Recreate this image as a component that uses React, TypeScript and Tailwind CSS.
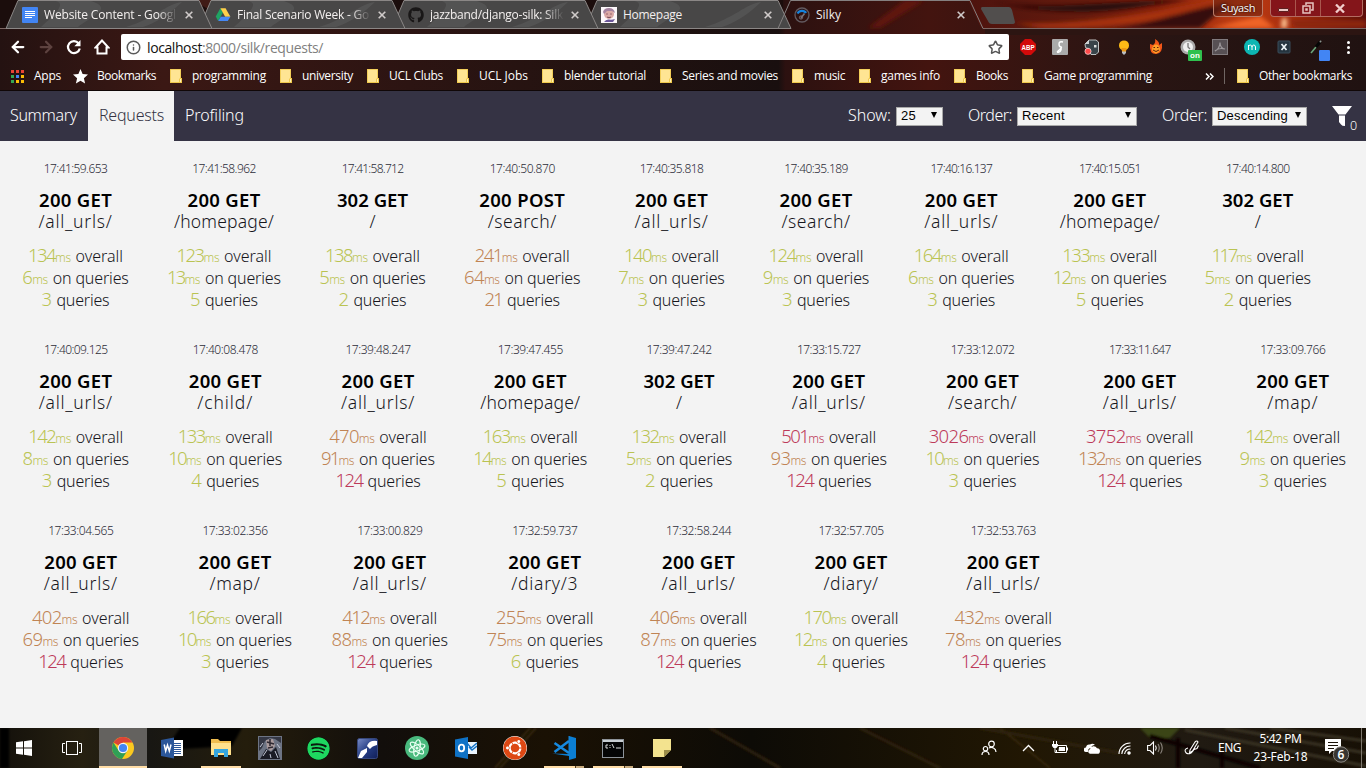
import { useLayoutEffect, useRef, type ReactNode } from "react";
import { ArrowLeft, ArrowRight, Star, Info } from "lucide-react";
import { FaSpotify, FaGithub, FaUbuntu } from "react-icons/fa";

/** Text that spaces its letters so that it fills exactly `w` pixels. */
function Fit({ w, children, className = "" }: { w: number; children: string; className?: string }) {
  const ref = useRef<HTMLSpanElement>(null);
  useLayoutEffect(() => {
    const el = ref.current;
    if (!el) return;
    el.style.letterSpacing = "0px";
    const natural = el.getBoundingClientRect().width;
    const gap = (w - natural) / children.length;
    el.style.letterSpacing = `${gap}px`;
  }, [w, children]);
  return <span ref={ref} className={`inline-block whitespace-pre ${className}`}>{children}</span>;
}

type Tone = "good" | "ok" | "bad";
const tones: Record<Tone, string> = { good: "text-[#bac352]", ok: "text-[#c08454]", bad: "text-[#bd3a5a]" };

type Req = {
  cell: string; time: string; status: string; path: string; pathWidth: number;
  overall: number; spent: number; count: number;
};

const P: Record<string, number> = {
  "/all_urls/": 74, "/homepage/": 100, "/": 6, "/search/": 69, "/child/": 56, "/map/": 51, "/diary/3": 67, "/diary/": 55,
};
const r = (cell: string, time: string, status: string, path: string, overall: number, spent: number, count: number): Req =>
  ({ cell, time, status, path, pathWidth: P[path], overall, spent, count });

const rows: Req[][] = [
  [
    r("w-[145px]", "17:41:59.653", "200 GET", "/all_urls/", 134, 6, 3),
    r("w-[152px]", "17:41:58.962", "200 GET", "/homepage/", 123, 13, 5),
    r("w-[145px]", "17:41:58.712", "302 GET", "/", 138, 5, 2),
    r("w-[154.5px]", "17:40:50.870", "200 POST", "/search/", 241, 64, 21),
    r("w-[144px]", "17:40:35.818", "200 GET", "/all_urls/", 140, 7, 3),
    r("w-[145px]", "17:40:35.189", "200 GET", "/search/", 124, 9, 3),
    r("w-[145.5px]", "17:40:16.137", "200 GET", "/all_urls/", 164, 6, 3),
    r("w-[151.5px]", "17:40:15.051", "200 GET", "/homepage/", 133, 12, 5),
    r("w-[144.5px]", "17:40:14.800", "302 GET", "/", 117, 5, 2),
  ],
  [
    r("w-[145.5px]", "17:40:09.125", "200 GET", "/all_urls/", 142, 8, 3),
    r("w-[153.5px]", "17:40:08.478", "200 GET", "/child/", 133, 10, 4),
    r("w-[152px]", "17:39:48.247", "200 GET", "/all_urls/", 470, 91, 124),
    r("w-[152.5px]", "17:39:47.455", "200 GET", "/homepage/", 163, 14, 5),
    r("w-[145px]", "17:39:47.242", "302 GET", "/", 132, 5, 2),
    r("w-[154.5px]", "17:33:15.727", "200 GET", "/all_urls/", 501, 93, 124),
    r("w-[153px]", "17:33:12.072", "200 GET", "/search/", 3026, 10, 3),
    r("w-[161.5px]", "17:33:11.647", "200 GET", "/all_urls/", 3752, 132, 124),
    r("w-[144.5px]", "17:33:09.766", "200 GET", "/map/", 142, 9, 3),
  ],
  [
    r("w-[155.5px]", "17:33:04.565", "200 GET", "/all_urls/", 402, 69, 124),
    r("w-[153px]", "17:33:02.356", "200 GET", "/map/", 166, 10, 3),
    r("w-[156.5px]", "17:33:00.829", "200 GET", "/all_urls/", 412, 88, 124),
    r("w-[153.5px]", "17:32:59.737", "200 GET", "/diary/3", 255, 75, 6),
    r("w-[154px]", "17:32:58.244", "200 GET", "/all_urls/", 406, 87, 124),
    r("w-[151px]", "17:32:57.705", "200 GET", "/diary/", 170, 12, 4),
    r("w-[153.5px]", "17:32:53.763", "200 GET", "/all_urls/", 432, 78, 124),
  ],
];

const toneOverall = (n: number): Tone => (n > 500 ? "bad" : n > 200 ? "ok" : "good");
const toneSpent = (n: number): Tone => (n > 200 ? "bad" : n > 50 ? "ok" : "good");
const toneCount = (n: number): Tone => (n > 100 ? "bad" : n > 20 ? "ok" : "good");
const numberWidth = (n: number) => [...String(n)].reduce((s, c) => s + (c === "1" ? 7.4 : 9.9), 0);
const timeWidth = (t: string) => [...t].reduce((s, c) => s + (c === "1" ? 4.6 : c === ":" || c === "." ? 3 : 6.45), 0);

function Line({ n, tone, unit, text, width }: { n: number; tone: Tone; unit?: boolean; text: string; width: number }) {
  return (
    <div className="flex h-[22px] items-baseline justify-center leading-[22px]">
      <Fit w={numberWidth(n)} className={`text-[18.5px] leading-[22px] ${tones[tone]}`}>{String(n)}</Fit>
      {unit && <Fit w={15.5} className={`text-[12px] ${tones[tone]}`}>ms</Fit>}
      <Fit w={width} className="ml-[5px] text-[16px] text-[#16161c]">{text}</Fit>
    </div>
  );
}

function Request({ q }: { q: Req }) {
  return (
    <div className={`flex shrink-0 flex-col items-center ${q.cell}`}>
      <Fit w={timeWidth(q.time)} className="h-[18px] text-[12px] leading-[18px] text-[#2c2c38]">{q.time}</Fit>
      <Fit w={q.status.endsWith("POST") ? 86 : q.status.startsWith("3") ? 71 : 73} className="mt-[11px] h-[22px] text-[18.5px] font-semibold leading-[21px] text-black">{q.status}</Fit>
      <Fit w={q.pathWidth} className="h-[20px] text-[17.5px] leading-[20px] text-[#16161c]">{q.path}</Fit>
      <div className="mt-[13px]">
        <Line n={q.overall} tone={toneOverall(q.overall)} unit text="overall" width={47.5} />
        <Line n={q.spent} tone={toneSpent(q.spent)} unit text="on queries" width={76} />
        <Line n={q.count} tone={toneCount(q.count)} text="queries" width={53} />
      </div>
    </div>
  );
}

function Wallpaper() {
  return (
    <svg className="absolute inset-0 h-[91px] w-[1366px]" viewBox="0 0 1366 91" preserveAspectRatio="none">
      <defs>
        <linearGradient id="base" x1="0" x2="1" y1="0" y2="0">
          <stop offset="0" stopColor="#241211" /><stop offset=".12" stopColor="#3b1814" />
          <stop offset=".3" stopColor="#2c1412" /><stop offset=".46" stopColor="#211210" />
          <stop offset=".57" stopColor="#190f0f" /><stop offset=".575" stopColor="#2c1110" />
          <stop offset=".68" stopColor="#43140f" /><stop offset=".82" stopColor="#2a1513" /><stop offset="1" stopColor="#201211" />
        </linearGradient>
        <linearGradient id="fire" x1="0" x2="1" y1="0" y2="0">
          <stop offset="0" stopColor="#4d130e" /><stop offset=".3" stopColor="#671b0d" /><stop offset=".48" stopColor="#821f0c" />
          <stop offset=".68" stopColor="#c03d13" /><stop offset=".82" stopColor="#a52c0e" /><stop offset="1" stopColor="#5c0d0a" />
        </linearGradient>
        <filter id="soft"><feGaussianBlur stdDeviation="2" /></filter>
      </defs>
      <rect width="1366" height="91" fill="url(#base)" />
      <rect width="783" height="28" fill="#1b0d0c" />
      <path d="M45 0H190L203 28H40Z M192 0H215L210 10Z" fill="#401b16" />
      <path d="M968 0H1366V28H981Z" fill="url(#fire)" />
      <g filter="url(#soft)">
        <path d="M990 2C1050 12 1110 0 1190 0L1150 5C1090 16 1040 12 990 2Z" fill="#27100f" />
        <path d="M1015 23C1080 26 1140 14 1215 0L1235 5C1170 20 1110 30 1040 28Z" fill="#a6320f" />
        <path d="M1110 28C1170 20 1190 8 1230 3L1200 28Z" fill="#341110" />
        <path d="M1210 28L1260 16 1275 28Z" fill="#ef6425" />
        <path d="M1282 18H1287V28H1281Z" fill="#ffc493" />
        <path d="M1290 20H1366V28H1295Z" fill="#8c260e" />
        <path d="M880 28L925 0H905L868 28Z" fill="#61190f" />
      </g>
      <rect y="29" x="985" width="381" height="6" fill="#2c1512" />
      <path d="M0 28.5H778M983 28.5H1366" stroke="#7d6764" />
      {[585, 392, 199, 6].map((x) => (
        <g key={x}>
          <path d={`M${x} 28.5L${x + 12} 0.5H${x + 193}L${x + 206} 28.5Z`} fill="#484747" stroke="#8b8786" />
          <path d={`M${x + 35} 27C${x + 60} 5 ${x + 55} 3 ${x + 50} 1H${x + 85}C${x + 110} 9 ${x + 82} 18 ${x + 72} 27ZM${x + 120} 27C${x + 150} 18 ${x + 160} 4 ${x + 176} 2C${x + 165} 13 ${x + 150} 23 ${x + 137} 27Z`} fill="#626161" opacity=".45" />
        </g>
      ))}
      <path d="M778 28.5L790.5 0.5H970L983 28.5" fill="none" stroke="#858080" />
      <path d="M982 7H1009Q1011 7 1012 10L1015 22Q1015 24 1012 24H992Q989 24 988 21L981 9Q981 7 982 7Z" fill="#514e4d" />
      <path d="M0 90.5H1366" stroke="#100707" />
    </svg>
  );
}

function DocsIcon() {
  return <svg className="h-4 w-4" viewBox="0 0 16 16"><rect width="16" height="16" rx="1" fill="#4285f4" /><path d="M3 4.5H13M3 6.5H13M3 8.5H13M3 10.5H10" stroke="#fff" /></svg>;
}
function DriveIcon() {
  return <svg className="h-4 w-4" viewBox="0 0 16 16"><path d="M5.4 1.2L.7 9.5 3.2 14 8 5.6Z" fill="#1fa463" /><path d="M5.4 1.2H10.6L15.4 9.8H10.2Z" fill="#ffd04b" /><path d="M5.8 9.8H15.4L12.8 14H3.2Z" fill="#4688f4" /></svg>;
}
function HomepageIcon() {
  return <svg className="h-4 w-4" viewBox="0 0 16 16"><rect width="16" height="16" fill="#fdf8fa" /><ellipse cx="8" cy="7" rx="5" ry="5" fill="#dba9a5" /><path d="M2 5Q3 1 8 1T14 6L11 4 6 4 3 7Z" fill="#a583a0" /><path d="M5 7H7M9 7H11M6 10Q8 11 10 10" stroke="#8a5565" strokeWidth=".8" /><path d="M3 15Q5 12 8 12.5T14 12L12 15Z" fill="#6b5799" /></svg>;
}
function SilkyIcon() {
  return <svg className="h-4 w-4" viewBox="0 0 16 16" fill="none"><circle cx="8" cy="8" r="7" stroke="#625a60" strokeWidth="1.3" /><path d="M3.5 6.5Q5 3.8 8 3.8T12 6" stroke="#1483df" strokeWidth="2.2" /><path d="M7 11L10.5 6.5" stroke="#77727a" strokeWidth="1.6" /><circle cx="7" cy="10.5" r="1.6" stroke="#77727a" /></svg>;
}
const Cross = () => <svg className="h-2 w-2" viewBox="0 0 8 8"><path d="M.7.7L7.3 7.3M7.3.7L.7 7.3" stroke="#d0cbca" strokeWidth="1.6" /></svg>;

const tabs: { icon: ReactNode; title: string; w: number; fade?: boolean }[] = [
  { icon: <DocsIcon />, title: "Website Content - Googl", w: 132, fade: true },
  { icon: <DriveIcon />, title: "Final Scenario Week - Go", w: 132, fade: true },
  { icon: <FaGithub className="h-4 w-4 text-[#191717]" />, title: "jazzband/django-silk: Silk", w: 133, fade: true },
  { icon: <HomepageIcon />, title: "Homepage", w: 59 },
  { icon: <SilkyIcon />, title: "Silky", w: 25 },
];

function TabStrip() {
  return (
    <div className="flex h-[29px]">
      <div className="flex pl-[6px]">
        {tabs.map((t) => (
          <div key={t.title} className="flex h-[30px] w-[193px] items-center pl-4 text-[12px] text-[#f3efee]">
            {t.icon}
            <div className={`ml-[6px] w-[134px] overflow-hidden ${t.fade ? "[mask-image:linear-gradient(90deg,#000_85%,transparent_100%)]" : ""}`}>
              <Fit w={t.w}>{t.title}</Fit>
            </div>
            <div className="ml-[7px]"><Cross /></div>
          </div>
        ))}
      </div>
      <div className="ml-auto flex pr-[3px]">
        <div className="mr-[7px] flex h-[17px] w-[50px] items-center justify-center rounded-b border border-t-0 border-[#b97b68] bg-[#6c2210]/60 text-[11px] text-white [text-shadow:0_0_2px_#000]"><Fit w={34}>Suyash</Fit></div>
        <div className="flex h-[17px] w-[93px] rounded-b border border-t-0 border-[#b46b61] bg-[#84151a]">
          <div className="flex w-[25px] items-center justify-center border-r border-[#a9574e]"><div className="mt-1 h-[4px] w-[11px] rounded-[1px] border border-[#5d2020] bg-[#ebc8c5]" /></div>
          <div className="flex w-[25px] items-center justify-center border-r border-[#a9574e]"><svg className="h-3 w-3" viewBox="0 0 12 12" fill="none" stroke="#e6c3c0" strokeWidth="1.5"><path d="M4 3V1H11V8H9" /><rect x="1" y="4" width="7" height="7" /><rect x="4" y="7" width="1" height="1" /></svg></div>
          <div className="flex flex-1 items-center justify-center pr-[3px]"><svg className="h-[9px] w-[10px]" viewBox="0 0 10 9"><path d="M1 .5L9 8.5M9 .5L1 8.5" stroke="#f0ccca" strokeWidth="2.3" /></svg></div>
        </div>
      </div>
    </div>
  );
}

const extensions: ReactNode[] = [
  <svg viewBox="0 0 16 16"><path d="M5 0H11L16 5V11L11 16H5L0 11V5Z" fill="#d20a0a" /><text x="8" y="10.6" textAnchor="middle" fontSize="7" fontWeight="700" fill="#fff" textLength="13" lengthAdjust="spacingAndGlyphs">ABP</text></svg>,
  <svg viewBox="0 0 16 16"><rect width="16" height="16" rx="1" fill="#aaa" /><path d="M11 3Q7 2 7 5T9 8 5 13M7 7Q10 8 9 11T5 13" stroke="#fff" strokeWidth="1.4" fill="none" /></svg>,
  <svg viewBox="0 0 16 16"><path d="M1 5L5 1H12L14.5 3V13L12 15.5H7L5 10 1.5 8.5Z" fill="#39444a" stroke="#cdd3d3" strokeWidth=".9" /><path d="M10 6H12.5V8.5H10Z" fill="#dce0e0" /><path d="M1 5L5 1V5H1Z" fill="#cbd2d2" /><circle cx="4" cy="12.3" r="3.1" fill="#ff4b4b" stroke="#fff" strokeWidth=".6" /></svg>,
  <svg viewBox="0 0 16 16"><circle cx="8" cy="6.4" r="5" fill="#fdbb16" /><path d="M5.5 9H10.5L10 13H6Z" fill="#ec9815" /><path d="M6 12.5H10V14L8 16 6 14Z" fill="#b9bec1" /></svg>,
  <svg viewBox="0 0 16 16"><path d="M7 0Q12 3 11 6L14 4Q15 15 8 15T2 5L5 6Q8 4 7 0Z" fill="#f25618" /><ellipse cx="8" cy="10" rx="4" ry="4.4" fill="#ff9d25" /><path d="M5.5 8.5H7M9 8.5H10.5M5 11Q8 14 11 11" stroke="#5d2010" fill="none" /></svg>,
  <svg viewBox="0 0 16 16" className="overflow-visible"><circle cx="8" cy="8" r="7.5" fill="#aaa9a9" /><circle cx="8" cy="8" r="5" fill="#eee" /><path d="M8 4V8L10 10" stroke="#777" strokeWidth="1.3" fill="none" /><rect x="8" y="11" width="14" height="11" rx="1" fill="#2fc04e" /><text x="15" y="19.3" textAnchor="middle" fontSize="8" fontWeight="700" fill="#fff">on</text></svg>,
  <svg viewBox="0 0 16 16"><rect x=".5" y=".5" width="15" height="15" fill="#575054" stroke="#817b7e" /><path d="M3 12C6 11 8 7 8 3.5C8 7 10 10 13 10C9 9 6 9 3 12Z" stroke="#9c979a" strokeWidth="1.2" fill="none" /></svg>,
  <svg viewBox="0 0 16 16"><circle cx="8" cy="8" r="8" fill="#0db6b3" /><path d="M4.5 11V6M4.5 7.5Q5 6 6.3 6T8 8V11M8 8Q8.4 6 9.8 6T11.5 8V11" stroke="#fff" fill="none" /></svg>,
  <svg viewBox="0 0 16 16"><rect x="2" y="2" width="12" height="12" rx="1" fill="#25343f" stroke="#3a4d5a" /><path d="M5.5 5L10.5 11M10.5 5L5.5 11" stroke="#edf4f7" strokeWidth="1.7" /></svg>,
  <svg viewBox="0 0 16 16" className="overflow-visible"><path d="M3 14L8 8" stroke="#6aa67a" strokeWidth="1.6" /><path d="M8 8L12 3" stroke="#060606" strokeWidth="3" /><path d="M12 2L13 3" stroke="#8b9690" strokeWidth="2" /><rect x="11" y="11" width="11" height="11" rx="1" fill="#4285f4" /></svg>,
];

function Toolbar() {
  return (
    <div className="flex h-[34px] items-center pt-[2px] text-white">
      <ArrowLeft className="ml-[9px] h-[18px] w-[18px]" strokeWidth={3} />
      <ArrowRight className="ml-[10px] h-[18px] w-[18px] text-[#5d423f]" strokeWidth={3} />
      <svg className="ml-[11px] h-4 w-4" viewBox="0 0 16 16" fill="none" stroke="currentColor"><path d="M12.6 4.2A6 6 0 1 0 13.8 9.5" strokeWidth="2.2" /><path d="M14.5 1V7.2H8.3Z" fill="currentColor" stroke="none" /></svg>
      <svg className="ml-[12px] h-4 w-4" viewBox="0 0 16 16" fill="none" stroke="currentColor" strokeWidth="2"><path d="M8 1.5L1.5 8.5H3.5V14.5H12.5V8.5H14.5Z" /></svg>
      <div className="ml-[11px] flex h-[26px] w-[888px] items-center rounded-[2px] bg-white pl-[5px] pr-[6px] text-[14px]">
        <Info className="h-[15px] w-[15px] text-[#5a5a5a]" strokeWidth={2.4} />
        <Fit w={55} className="ml-[6px] text-[#111]">localhost</Fit>
        <Fit w={121} className="text-[#7f7f7f]">:8000/silk/requests/</Fit>
        <Star className="ml-auto h-[15px] w-[15px] text-[#555]" strokeWidth={2.4} />
      </div>
      <div className="ml-[11px] flex gap-4">
        {extensions.map((e, i) => <div key={i} className="h-4 w-4 font-['Liberation_Sans'] *:h-4 *:w-4">{e}</div>)}
      </div>
      <div className="ml-[23px] flex flex-col gap-[2px]">{[0, 1, 2].map((i) => <div key={i} className="h-[3px] w-[3px] rounded-full bg-white" />)}</div>
    </div>
  );
}

const Folder = () => <svg className="h-[14px] w-3 shrink-0" viewBox="0 0 12 14"><path d="M0 0H11V9H12V14H0Z" fill="#f0c94c" /><path d="M.8.8H10.2V9L9 10V13H.8Z" fill="#ffe593" /><path d="M10 10H11V13H10Z" fill="#fff0b8" /></svg>;
const bookmarks: [string, number][] = [
  ["programming", 74], ["university", 51], ["UCL Clubs", 54], ["UCL Jobs", 49], ["blender tutorial", 82],
  ["Series and movies", 96], ["music", 31], ["games info", 59], ["Books", 32], ["Game programming", 108],
];

function BookmarksBar() {
  return (
    <div className="flex h-[28px] items-center pb-[2px] text-[12px] text-white">
      <div className="ml-[11px] grid grid-cols-3 gap-[2px]">
        {["bg-[#e94335]", "bg-[#e94335]", "bg-[#e94335]", "bg-[#34a853]", "bg-[#4285f4]", "bg-[#fbbc05]", "bg-[#34a853]", "bg-[#fbbc05]", "bg-[#fbbc05]"].map((c, i) => <div key={i} className={`h-[3px] w-[3px] ${c}`} />)}
      </div>
      <Fit w={27} className="ml-[10px]">Apps</Fit>
      <svg className="ml-[12px] h-[15px] w-[15px]" viewBox="0 0 15 15"><path d="M7.5 0L9.6 5.1 15 5.6 10.9 9.2 12.1 14.6 7.5 11.8 2.9 14.6 4.1 9.2 0 5.6 5.4 5.1Z" fill="#fff" /></svg>
      <Fit w={59} className="ml-[9px]">Bookmarks</Fit>
      <div className="ml-[14px] flex items-center gap-[14px]">
        {bookmarks.map(([label, w]) => <div key={label} className="flex items-center gap-[10px]"><Folder /><Fit w={w}>{label}</Fit></div>)}
      </div>
      <svg className="ml-auto h-[7px] w-[9px]" viewBox="0 0 9 7"><path d="M1 .5L4 3.5 1 6.5M5 .5L8 3.5 5 6.5" stroke="#fff" strokeWidth="1.5" fill="none" /></svg>
      <div className="mx-[10px] h-4 w-px bg-[#706663]" />
      <div className="mr-[14px] ml-[2px] flex items-center gap-[10px]"><Folder /><Fit w={93}>Other bookmarks</Fit></div>
    </div>
  );
}

function Select({ label, labelWidth, value, valueWidth, box }: { label: string; labelWidth: number; value: string; valueWidth: number; box: string }) {
  return (
    <div className="flex items-center">
      <Fit w={labelWidth} className="mb-[2px] text-[16px] text-white">{label}</Fit>
      <div className={`ml-[5px] flex h-[19px] items-center justify-between border border-[#a9a9a9] bg-[#f3f3f3] pl-[4px] pr-[5px] font-['Liberation_Sans'] text-[13px] font-normal text-black ${box}`}>
        <Fit w={valueWidth}>{value}</Fit>
        <svg className="mb-[2px] h-[6px] w-[6px]" viewBox="0 0 7 7"><path d="M0 0H7L3.5 7Z" fill="#000" /></svg>
      </div>
    </div>
  );
}

function Nav() {
  return (
    <nav className="flex h-[50px] shrink-0 bg-[#353344] text-[16px] font-[350] text-white">
      <div className="flex w-[88px] items-center pb-[2px] pl-[10px]"><Fit w={67}>Summary</Fit></div>
      <div className="flex w-[86px] items-center bg-[#f3f3f3] pb-[2px] pl-[11px] font-light text-[#353344]"><Fit w={65}>Requests</Fit></div>
      <div className="flex items-center pb-[2px] pl-[11px]"><Fit w={59}>Profiling</Fit></div>
      <div className="ml-auto flex items-center gap-[25px]">
        <Select label="Show:" labelWidth={43} value="25" valueWidth={15} box="w-[47px]" />
        <Select label="Order:" labelWidth={44} value="Recent" valueWidth={43} box="w-[120px]" />
        <Select label="Order:" labelWidth={45} value="Descending" valueWidth={71} box="w-[95px]" />
      </div>
      <div className="ml-[25px] flex w-[34px] pt-[15px]">
        <svg className="h-5 w-5 shrink-0" viewBox="0 0 20 20"><path d="M0 0H20L13.5 8.5H6.5Z M7 9.5H13V20Q10 20 9 18.5L7 16Z" fill="#fff" /></svg>
        <span className="-ml-[2px] mt-[11px] text-[12.5px] leading-[18px]">0</span>
      </div>
    </nav>
  );
}

const taskIcons: { icon: ReactNode; line?: boolean; active?: boolean; stacked?: boolean }[] = [
  { icon: <svg className="h-4 w-4" viewBox="0 0 16 16"><path d="M0 2.3L7 1.3V7.5H0ZM8 1.2L16 0V7.5H8ZM0 8.5H7V14.7L0 13.7ZM8 8.5H16V16L8 14.8Z" fill="#fff" /></svg> },
  { icon: <svg className="mr-[3px] h-4 w-5" viewBox="0 0 20 16" fill="none" stroke="#fff"><rect x="4.5" y="1.5" width="11" height="13" /><path d="M3 3.5H.5V12.5H3M17 3.5H19.5V12.5H17" /></svg> },
  { active: true, line: true, icon: <svg className="h-[22px] w-[22px]" viewBox="0 0 22 22"><circle cx="11" cy="11" r="11" fill="#fbc91f" /><path d="M11 11L1.5 5.5A11 11 0 0 1 20.5 5.5H11Z" fill="#db4437" /><path d="M1.5 5.5A11 11 0 0 0 10 22L15.5 13.5 6.5 13.5Z" fill="#2f9f56" /><circle cx="11" cy="11" r="5.2" fill="#f5f5f5" /><circle cx="11" cy="11" r="4.1" fill="#4285f4" /></svg> },
  { icon: <svg className="h-[22px] w-[22px]" viewBox="0 0 22 22"><rect x="11" y="3" width="11" height="16" fill="#fff" /><path d="M13 6.5H20M13 8.5H20M13 10.5H20M13 12.5H20M13 14.5H20M13 16.5H20" stroke="#2b579a" /><path d="M0 3L13 .5V21.5L0 19Z" fill="#2b579a" /><path d="M3.2 7.5L4.7 14 6.5 8 8.3 14 10 7.5" fill="none" stroke="#fff" strokeWidth="1.5" /></svg> },
  { line: true, icon: <svg className="h-[20px] w-[22px]" viewBox="0 0 22 20"><path d="M1 1H8L10 3H21V16H1Z" fill="#f0bd4f" /><path d="M1 5H21V17H1Z" fill="#ffe18d" /><path d="M4 19V11H18V19H14V15H8V19Z" fill="#35a6df" /></svg> },
  { icon: <svg className="h-6 w-6" viewBox="0 0 24 24"><rect width="24" height="24" fill="#6d7484" /><path d="M1 1H23V7L17 3 12 2 7 5 4 12 1 15Z" fill="#343744" /><path d="M8 4L15 3 17 10 13 15 9 12Z" fill="#a99a9c" /><path d="M9 6L16 8M12 3V10M10 12L15 11" stroke="#2e2831" strokeWidth="1.5" /><path d="M2 23L8 13 13 16 18 11 22 23Z" fill="#1a1b25" /><path d="M5 20L9 14M17 15L20 22M12 18L13 22M2 11L5 7M19 8L22 12" stroke="#c3c8d8" /></svg> },
  { icon: <FaSpotify className="h-[23px] w-[23px] rounded-full bg-[#0a1a0e] text-[#1ed760]" /> },
  { icon: <svg className="h-[21px] w-[21px]" viewBox="0 0 21 21"><defs><linearGradient id="blade" x2="1" y2="1"><stop stopColor="#7a8dc7" /><stop offset=".5" stopColor="#263e85" /><stop offset="1" stopColor="#111f59" /></linearGradient></defs><rect x=".5" y=".5" width="20" height="20" rx="2" fill="url(#blade)" stroke="#36477c" /><path d="M10 8Q12 2 20 3V7Q15 8 13 11Z M1 20L4 13 10 10 10 14 5 20Z" fill="#fff" /></svg> },
  { icon: <svg className="h-6 w-6" viewBox="0 0 24 24" fill="none" stroke="#e8fff2" strokeWidth="1.1"><circle cx="12" cy="12" r="12" fill="#49b97d" stroke="none" /><ellipse cx="12" cy="12" rx="3" ry="8.3" transform="rotate(10 12 12)" /><ellipse cx="12" cy="12" rx="3" ry="8.3" transform="rotate(70 12 12)" /><ellipse cx="12" cy="12" rx="3" ry="8.3" transform="rotate(130 12 12)" /><circle cx="12" cy="12" r="1" fill="#fff" /></svg> },
  { icon: <svg className="h-[22px] w-[22px]" viewBox="0 0 22 22"><rect x="11" y="5" width="11" height="12" fill="#eaf4fd" /><path d="M12 6L16 11 22 6M14 10L17 13 22 9" stroke="#1373c8" strokeWidth="1.4" fill="none" /><path d="M0 2.5L13 0V22L0 19.5Z" fill="#0f72c6" /><ellipse cx="6.5" cy="11" rx="2.7" ry="3.3" stroke="#fff" strokeWidth="1.8" fill="none" /></svg> },
  { icon: <FaUbuntu className="h-6 w-6 rounded-full bg-white text-[#dd4814]" /> },
  { line: true, stacked: true, icon: <svg className="h-6 w-6" viewBox="0 0 24 24"><path d="M17 0L24 2V22L17 24V20L0 17.5 17 18Z" fill="#0b7ed3" /><path d="M17 5L2.5 16M2.5 7L17 17" stroke="#1689df" strokeWidth="2.6" /><path d="M17 0V20" stroke="#1686d9" /></svg> },
  { line: true, stacked: true, icon: <svg className="h-[19px] w-[22px]" viewBox="0 0 22 19"><rect x=".5" y=".5" width="21" height="18" fill="#050505" stroke="#8d9399" /><path d="M1 2H21" stroke="#c9ced2" strokeWidth="2" /><path d="M6 6H4V9H6M8 6V7M8 8V9M10 5L12 9M14 9H19" stroke="#ddd" fill="none" /></svg> },
  { line: true, icon: <svg className="h-[18px] w-[18px]" viewBox="0 0 18 18"><path d="M0 0H18V11L11 18H0Z" fill="#f3e38f" /><path d="M11 11H18L11 18Z" fill="#9c8d49" /></svg> },
];

function Taskbar() {
  return (
    <footer className="relative flex h-[40px] shrink-0 overflow-hidden bg-[#100c05] text-[12px] text-white">
      <svg className="absolute inset-0 h-[40px] w-[1366px]" viewBox="0 0 1366 40">
        <defs>
          <linearGradient id="road" x2="1"><stop stopColor="#14110b" /><stop offset=".06" stopColor="#262011" /><stop offset=".11" stopColor="#181713" /><stop offset=".18" stopColor="#241d0c" /><stop offset=".28" stopColor="#120e0b" /><stop offset=".4" stopColor="#1a1104" /><stop offset=".55" stopColor="#0d0b06" /><stop offset=".75" stopColor="#211703" /><stop offset=".88" stopColor="#201a12" /><stop offset="1" stopColor="#171005" /></linearGradient>
          <filter id="haze"><feGaussianBlur stdDeviation="1.2" /></filter>
        </defs>
        <rect width="1366" height="40" fill="url(#road)" />
        <g filter="url(#haze)">
          <path d="M0 40V0H9V40ZM165 22L180 0H242L232 18Z" fill="#050505" />
          <path d="M495 40L530 0M500 40L536 0M1000 0L1050 40" stroke="#3f2e12" strokeWidth="1.5" />
          <path d="M710 0L780 40M860 0L940 40M980 0L1120 25" stroke="#2d230e" strokeWidth="3" />
          <path d="M1140 0H1180L1170 10H1150Z" fill="#3b4516" />
          <path d="M1185 2L1366 38M1225 0L1366 25M1270 0L1366 13" stroke="#383024" strokeWidth="3" />
          <path d="M1150 8L1260 40M1178 10V40M1222 24V40" stroke="#080602" strokeWidth="4" />
        </g>
      </svg>
      <div className="relative flex">
        {taskIcons.map((t, i) => (
          <div key={i} className={`flex h-[40px] flex-col items-center ${i === 0 ? "w-[48px]" : i === 1 ? "w-[51px]" : i === 2 ? "w-[48px]" : "w-[49px]"}`}>
            <div className={`flex h-[38px] items-center justify-center pt-[2px] ${t.active ? "w-[48px] bg-[#64625f]" : "w-[40px]"}`}>{t.icon}</div>
            {t.line && <div className={`flex h-[2px] justify-end bg-[#ffdda6] ${t.active ? "w-[48px]" : "w-[40px]"}`}>{t.stacked && <div className="h-[2px] w-[9px] border-l border-[#4b3a20] bg-[#c8ab7e]" />}</div>}
          </div>
        ))}
      </div>
      <div className="relative ml-auto flex h-[40px] items-center">
        <svg className="mr-[25px] h-4 w-4" viewBox="0 0 16 16" fill="none" stroke="#fff" strokeWidth="1.2"><circle cx="10.5" cy="4" r="2.8" /><circle cx="4.5" cy="8.7" r="2.2" /><path d="M1 15Q1 11.5 4.5 11.5T8 15M8 8Q10 6.8 12.5 8T15 12" /></svg>
        <svg className="mr-[17px] h-[8px] w-[13px]" viewBox="0 0 13 8"><path d="M1 7L6.5 1.5 12 7" fill="none" stroke="#fff" strokeWidth="1.3" /></svg>
        <svg className="mr-[16px] h-[14px] w-4" viewBox="0 0 16 14" fill="none" stroke="#fff"><path d="M5 4.5H14.5V11.5H4.5V9" /><path d="M7 6H13V10H6.5Z" fill="#fff" stroke="none" /><path d="M1.5 0V3M4.5 0V3M3 7V11.5H5M15.5 6.5V9.5" /><path d="M0 3H6V5L4.5 7H1.5L0 5Z" fill="#fff" stroke="none" /></svg>
        <svg className="mr-[18px] h-[11px] w-4" viewBox="0 0 16 11"><path d="M4 9H2A2 2 0 0 1 2 4.5A3.5 3.5 0 0 1 6 1.5A4 4 0 0 1 11 2A4 4 0 0 0 7 5A3.5 3.5 0 0 0 4 9Z M6 10.8A2.3 2.3 0 0 1 6 6.3A3.8 3.8 0 0 1 13 5.2A2.8 2.8 0 0 1 13.3 10.8Z" fill="#fff" /></svg>
        <svg className="mr-[16px] h-[13px] w-[13px]" viewBox="0 0 13 13" fill="none" stroke="#fff" strokeWidth="1.1"><path d="M1 12A11 11 0 0 1 12.5 1M3.8 12A8.5 8.5 0 0 1 12.5 4M6.6 12A6 6 0 0 1 12.5 7" /><circle cx="11" cy="11" r="1.2" fill="#fff" /></svg>
        <svg className="mr-[20px] h-[14px] w-[17px]" viewBox="0 0 17 14" fill="none" stroke="#fff" strokeWidth="1.1"><path d="M.6 4.5H3L6.5 1V13L3 9.5H.6Z" /><path d="M8.5 4.5Q10 7 8.5 9.5" /><path d="M11 3Q13.5 7 11 11M13.5 1.5Q17 7 13.5 12.5" stroke="#8d8780" /></svg>
        <svg className="mr-[18px] h-4 w-4" viewBox="0 0 16 16" fill="none" stroke="#fff" strokeWidth="1.1"><path d="M6 10L11 2Q13 0 14 2L8.5 11 5.5 13ZM4 8Q0 9 1.5 12T7 13Q9 11 10 9.5L13 8.5 14.5 5.5" /></svg>
        <Fit w={23}>ENG</Fit>
        <div className="ml-[12px] flex w-[55px] flex-col items-center leading-[18px]">
          <Fit w={42}>5:42 PM</Fit>
          <Fit w={54}>23-Feb-18</Fit>
        </div>
        <svg className="ml-[17px] mt-[5px] h-[24px] w-[25px] font-['Noto_Sans']" viewBox="0 0 25 24"><path d="M0 0H16V12H7L4 15V12H0Z" fill="#fff" /><path d="M3 3.5H13M3 6.5H13M3 9.5H9" stroke="#1b1409" /><circle cx="16" cy="15.5" r="7.7" fill="#383530" stroke="#8b8883" /><text x="16" y="20" textAnchor="middle" fontSize="12" fontWeight="600" fill="#fff">6</text></svg>
        <div className="ml-[11px] mr-[4px] h-[40px] w-px bg-[#7c766c]" />
      </div>
    </footer>
  );
}

export default function App() {
  return (
    <div className="flex h-[768px] w-[1366px] flex-col overflow-hidden bg-[#f3f3f3] font-['Noto_Sans',sans-serif]">
      <header className="relative h-[91px] shrink-0 overflow-hidden font-['Open_Sans',sans-serif]">
        <Wallpaper />
        <div className="relative"><TabStrip /><Toolbar /><BookmarksBar /></div>
      </header>
      <Nav />
      <main className="flex-1 pl-[3px] pt-[19px] font-light">
        {rows.map((row, i) => (
          <div key={i} className="flex h-[181px]">{row.map((q) => <Request key={q.time} q={q} />)}</div>
        ))}
      </main>
      <Taskbar />
    </div>
  );
}
